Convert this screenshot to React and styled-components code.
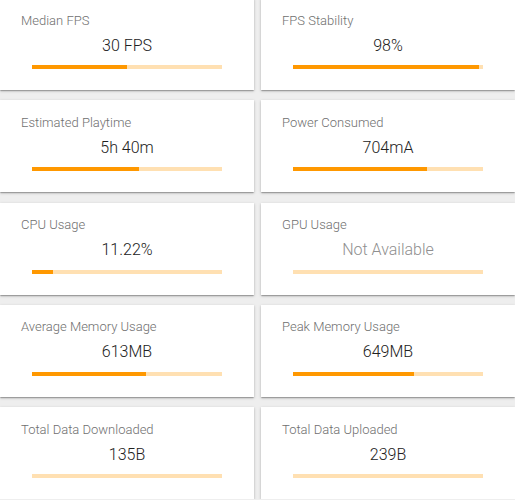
import React from "react";
import styled, { createGlobalStyle } from "styled-components";

const Global = createGlobalStyle`
  html, body { margin: 0; padding: 0; background: #eeeeee; }
  body { font-family: Roboto, "Noto Sans", "Liberation Sans", sans-serif; overflow: hidden; }
`;

const Grid = styled.div`
  display: grid;
  grid-template-columns: 254px 254px;
  column-gap: 7px;
  row-gap: 10.25px;
  margin-top: -2px;
`;

const Card = styled.div`
  background: #ffffff;
  height: 92px;
  box-sizing: border-box;
  padding-top: 14.5px;
  display: flex;
  flex-direction: column;
  box-shadow: 0 1px 3px rgba(0, 0, 0, 0.2), 0 1px 1px rgba(0, 0, 0, 0.14),
    0 2px 1px -1px rgba(0, 0, 0, 0.12);
`;

const Label = styled.div`
  padding: 0 21px;
  font-size: 13px;
  font-weight: 300;
  line-height: 16px;
  color: #6f6f6f;
`;

const Value = styled.div`
  margin-top: 7px;
  font-size: 16px;
  font-weight: 300;
  line-height: 20px;
  text-align: center;
  color: ${(p) => (p.$muted ? "#8f8f8f" : "#212121")};
`;

const Track = styled.div`
  margin: 9.5px auto 0;
  width: 75%;
  height: 4px;
  background: #ffe0b2;
  overflow: hidden;
`;

const Fill = styled.div`
  height: 100%;
  background: #ff9800;
`;

const metrics = [
  { label: "Median FPS", value: "30 FPS", pct: 50 },
  { label: "FPS Stability", value: "98%", pct: 98 },
  { label: "Estimated Playtime", value: "5h 40m", pct: 56.5 },
  { label: "Power Consumed", value: "704mA", pct: 70.5 },
  { label: "CPU Usage", value: "11.22%", pct: 11.22 },
  { label: "GPU Usage", value: "Not Available", pct: 0, muted: true },
  { label: "Average Memory Usage", value: "613MB", pct: 60 },
  { label: "Peak Memory Usage", value: "649MB", pct: 63.6 },
  { label: "Total Data Downloaded", value: "135B", pct: 0 },
  { label: "Total Data Uploaded", value: "239B", pct: 0 },
];

export default function App() {
  return (
    <>
      <Global />
      <Grid>
        {metrics.map((m) => (
          <Card key={m.label}>
            <Label>{m.label}</Label>
            <Value $muted={m.muted}>{m.value}</Value>
            <Track>
              <Fill style={{ width: `${m.pct}%` }} />
            </Track>
          </Card>
        ))}
      </Grid>
    </>
  );
}
